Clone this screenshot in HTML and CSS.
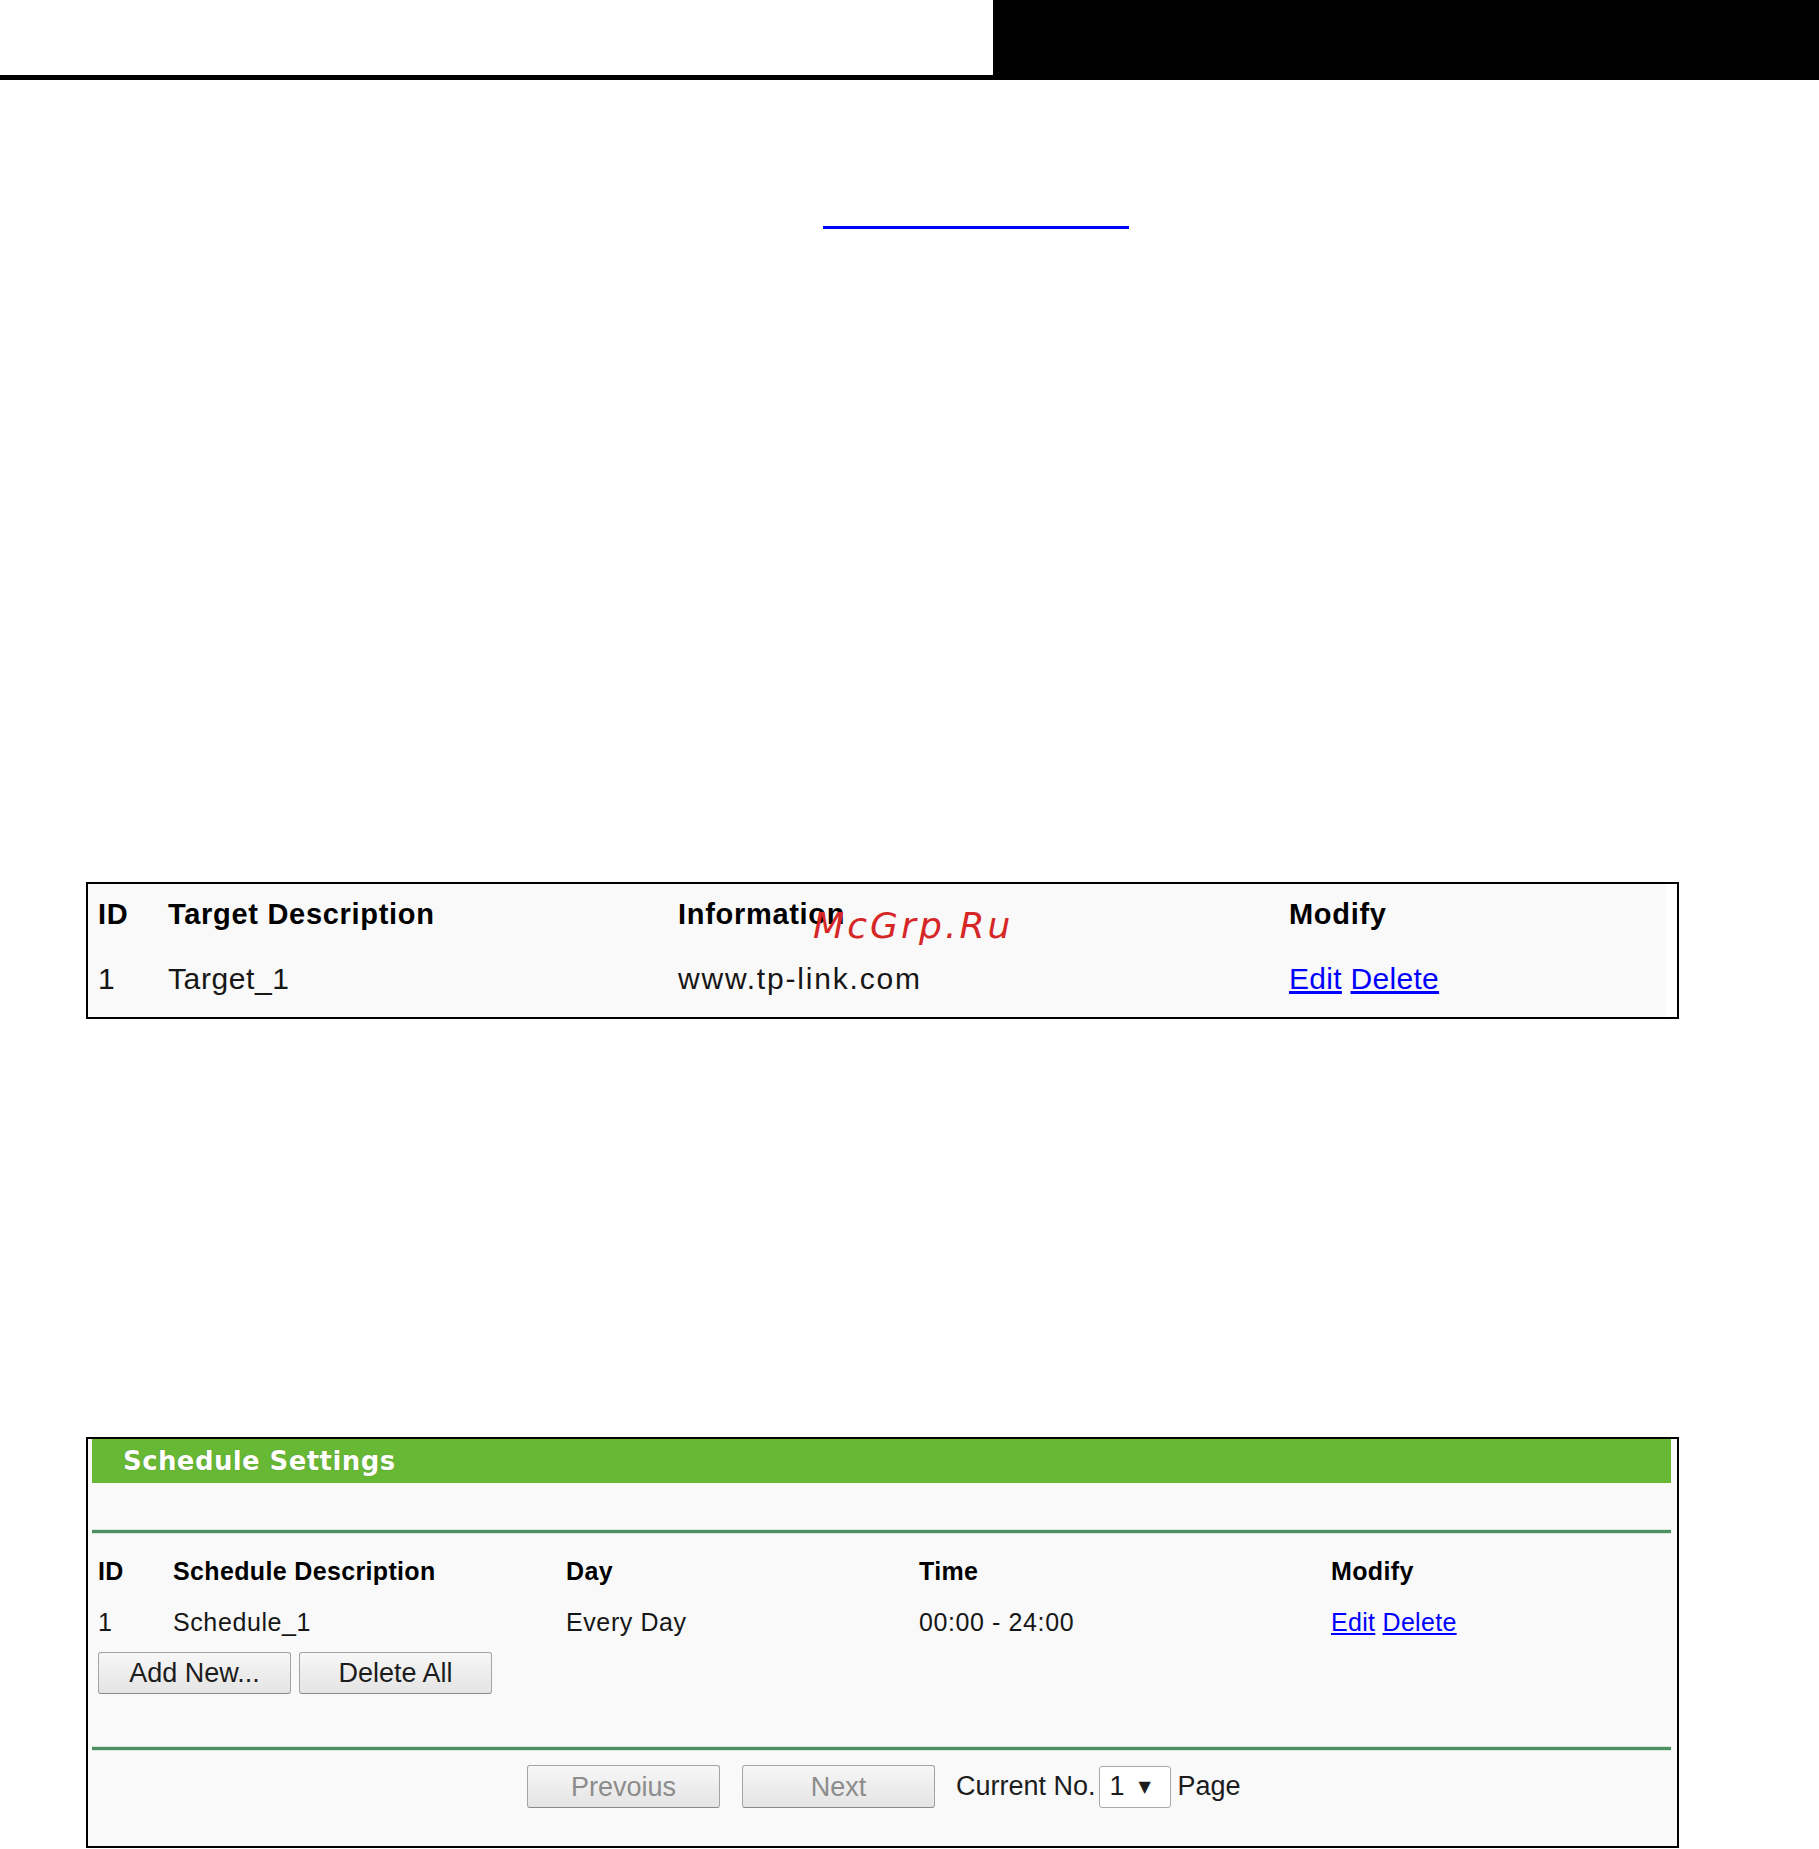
FILE: index.html
```html
<!DOCTYPE html>
<html>
<head>
<meta charset="utf-8">
<title>Schedule</title>
<link rel="stylesheet" href="styles.css">
</head>
<body>
<div class="topbar"><div class="topbar-white"></div></div>
<div class="blue-link"></div>

<div class="target-box">
  <div class="target-grid">
    <div class="th">ID</div>
    <div class="th">Target Description</div>
    <div class="th">Information</div>
    <div class="th">Modify</div>
    <div class="td">1</div>
    <div class="td">Target_1</div>
    <div class="td td-info">www.tp-link.com</div>
    <div class="td td-links"><a class="lnk" href="#">Edit</a> <a class="lnk" href="#">Delete</a></div>
  </div>
</div>

<div class="watermark">McGrp.Ru</div>

<div class="sched-box">
  <div class="sched-inner">
    <div class="sched-title">Schedule Settings</div>
    <div class="sched-gap"></div>
    <div class="sep"></div>
    <div class="sched-grid">
      <div class="sh">ID</div>
      <div class="sh">Schedule Description</div>
      <div class="sh">Day</div>
      <div class="sh">Time</div>
      <div class="sh">Modify</div>
      <div class="sd">1</div>
      <div class="sd">Schedule_1</div>
      <div class="sd">Every Day</div>
      <div class="sd">00:00 - 24:00</div>
      <div class="sd sd-links"><a class="lnk" href="#">Edit</a> <a class="lnk" href="#">Delete</a></div>
    </div>
    <div class="btn-row">
      <button class="btn">Add New...</button>
      <button class="btn">Delete All</button>
    </div>
    <div class="sep sep-bottom"></div>
    <div class="pager">
      <button class="btn btn-disabled">Prevoius</button>
      <button class="btn btn-disabled btn-next">Next</button>
      <span class="pager-text">Current No.</span>
      <span class="select"><span class="select-val">1</span><span class="select-arrow">▼</span></span>
      <span class="pager-text pager-page">Page</span>
    </div>
  </div>
</div>
</body>
</html>
```

FILE: styles.css
```css
html, body {
  margin: 0;
  padding: 0;
  background: #ffffff;
}
body {
  width: 1819px;
  height: 1849px;
  position: relative;
  font-family: "Liberation Sans", Arial, sans-serif;
  color: #111111;
  overflow: hidden;
}

.topbar {
  height: 80px;
  background: #000000;
  display: flex;
}
.topbar-white {
  width: 993px;
  height: 75px;
  background: #ffffff;
}

.blue-link {
  margin-top: 146px;
  margin-left: 823px;
  width: 306px;
  height: 3px;
  background: #0000ff;
}

/* ---- target table ---- */
.target-box {
  margin-top: 653px;
  margin-left: 86px;
  width: 1589px;
  border: 2px solid #000000;
  background: #ffffff;
}
.target-grid {
  margin-right: 11px;
  background: #f9f9f9;
  display: grid;
  grid-template-columns: 70px 510px 611px 1fr;
  padding: 1px 0 3px 10px;
}
.th {
  font-weight: bold;
  font-size: 29px;
  line-height: 58px;
  letter-spacing: 0.7px;
  color: #000000;
  white-space: nowrap;
}
.td {
  font-size: 30px;
  line-height: 71px;
  letter-spacing: 0.6px;
  color: #161616;
  white-space: nowrap;
}
.td-info {
  letter-spacing: 1.8px;
}
.td-links {
  letter-spacing: 0.3px;
}
.lnk {
  color: #0000ff;
  text-decoration: underline;
}

.watermark {
  position: absolute;
  left: 813px;
  top: 908px;
  font-family: "DejaVu Sans", sans-serif;
  font-style: oblique;
  font-size: 36px;
  line-height: 36px;
  letter-spacing: 3.1px;
  color: #d62626;
}

/* ---- schedule box ---- */
.sched-box {
  margin-top: 418px;
  margin-left: 86px;
  width: 1589px;
  border: 2px solid #000000;
  background: #f9f9f9;
}
.sched-inner {
  padding: 0 6px 38px 4px;
}
.sched-title {
  height: 44px;
  background: #67b834;
  color: #ffffff;
  font-family: "DejaVu Sans", sans-serif;
  font-weight: bold;
  font-size: 26px;
  line-height: 44px;
  letter-spacing: 0.4px;
  padding-left: 31px;
  text-shadow: 0 0 1px rgba(60, 90, 20, 0.6);
  white-space: nowrap;
}
.sched-gap {
  height: 47px;
}
.sep {
  height: 3px;
  background: #4a9060;
  box-shadow: 0 1px 0 #d8e8dc, 0 -1px 0 #d8e8dc;
}
.sched-grid {
  display: grid;
  grid-template-columns: 75px 393px 353px 412px 1fr;
  padding: 13px 0 0 6px;
}
.sh {
  font-weight: bold;
  font-size: 25px;
  line-height: 51px;
  letter-spacing: 0.35px;
  color: #000000;
  white-space: nowrap;
}
.sd {
  font-size: 25px;
  line-height: 51px;
  color: #161616;
  letter-spacing: 0.6px;
  white-space: nowrap;
}
.sd-links {
  letter-spacing: 0.3px;
}
.btn-row {
  display: flex;
  gap: 8px;
  padding: 4px 0 0 6px;
}
.btn {
  width: 193px;
  height: 42px;
  margin: 0;
  padding: 0;
  border: 1px solid #a4a4a4;
  border-bottom-color: #8a8a8a;
  border-radius: 3px;
  background: linear-gradient(#f7f7f7, #e4e4e4);
  font-family: "Liberation Sans", Arial, sans-serif;
  font-size: 27px;
  color: #1c1c1c;
  text-align: center;
  line-height: 40px;
}
.sep-bottom {
  margin-top: 53px;
}
.pager {
  display: flex;
  align-items: center;
  padding: 15px 0 0 435px;
  height: 43px;
}
.btn-disabled {
  height: 43px;
  color: #8c8c8c;
}
.btn-next {
  margin-left: 22px;
}
.pager-text {
  font-size: 27px;
  color: #1c1c1c;
  margin-left: 21px;
  white-space: nowrap;
}
.select {
  margin-left: 3px;
  width: 70px;
  height: 40px;
  border: 1px solid #a9a9a9;
  border-radius: 3px;
  background: #ffffff;
  display: flex;
  align-items: center;
  font-size: 27px;
  color: #1c1c1c;
}
.select-val {
  margin-left: 10px;
}
.select-arrow {
  margin-left: 14px;
  font-family: "DejaVu Sans", sans-serif;
  font-size: 16px;
}
.pager-page {
  margin-left: 7px;
}
```
